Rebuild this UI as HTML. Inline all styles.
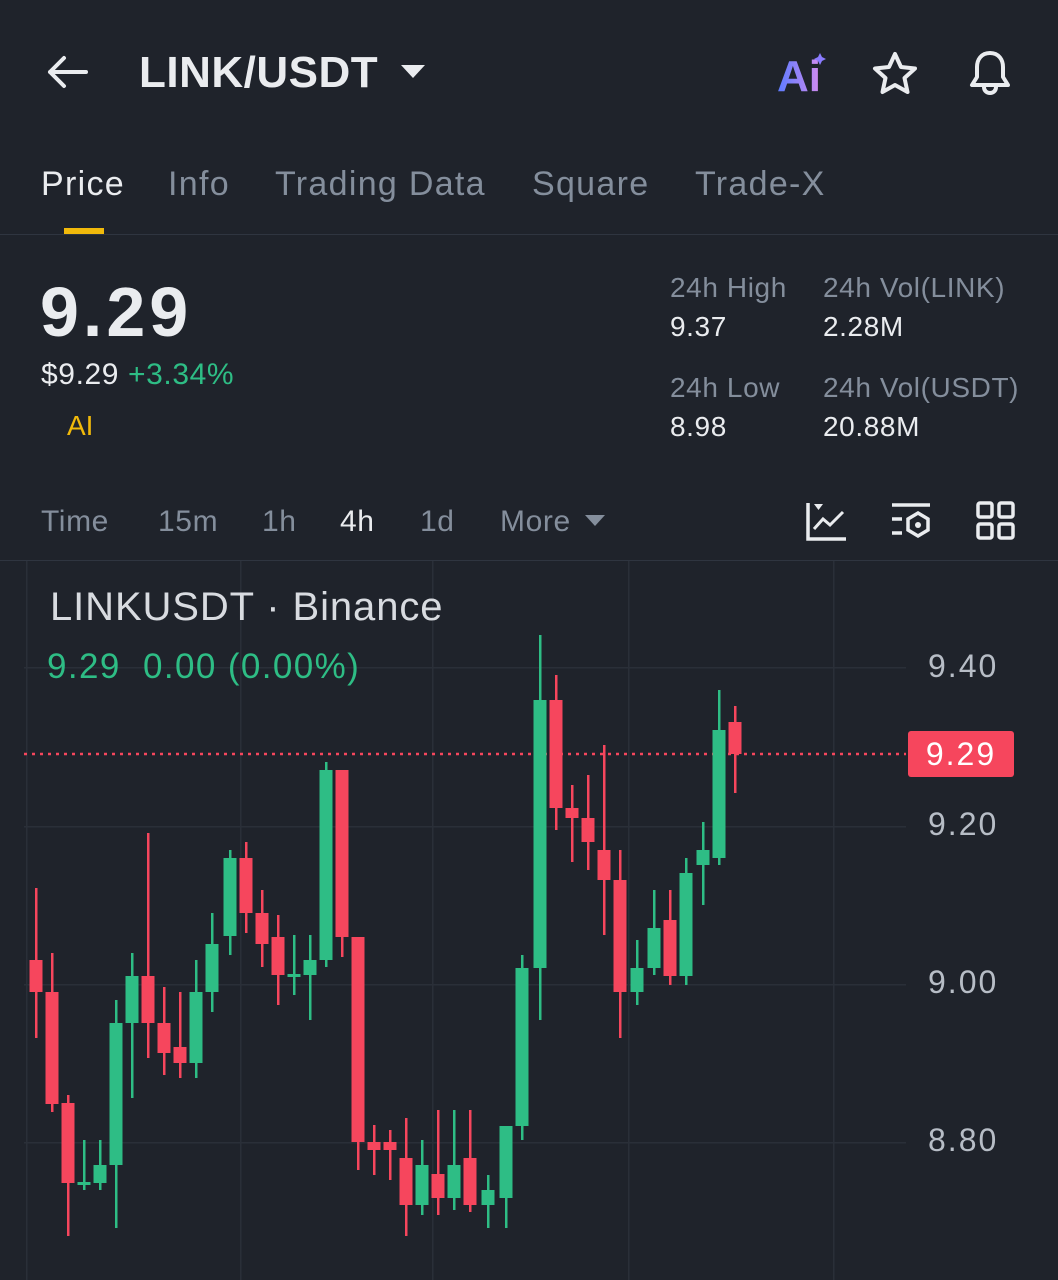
<!DOCTYPE html>
<html><head><meta charset="utf-8"><style>
*{margin:0;padding:0;box-sizing:border-box}
body{width:1058px;height:1280px;background:#1f232b;color:#eaecef;font-family:"Liberation Sans",sans-serif;position:relative;overflow:hidden}
.a{position:absolute;white-space:nowrap}
.g{color:#848e9c}
.t{letter-spacing:1.3px}
.s{letter-spacing:0.6px}
.p{letter-spacing:2px}
</style></head><body>
<svg class="a" style="left:44px;top:52px" width="48" height="40" viewBox="0 0 48 40"><path d="M42 20H6M20 6L6 20l14 14" fill="none" stroke="#eaecef" stroke-width="4" stroke-linecap="round" stroke-linejoin="round"/></svg>
<div class="a" style="left:139px;top:48px;font-size:44px;font-weight:bold;letter-spacing:0.5px">LINK/USDT</div>
<svg class="a" style="left:400px;top:64px" width="26" height="16"><path d="M1 1h24L13 14z" fill="#eaecef"/></svg>
<svg class="a" style="left:775px;top:50px" width="56" height="46" viewBox="0 0 56 46">
<defs><linearGradient id="ag" x1="0" x2="1"><stop offset="0" stop-color="#5b7bff"/><stop offset="1" stop-color="#d38cf0"/></linearGradient></defs>
<text x="2" y="41" font-family="Liberation Sans" font-weight="bold" font-size="44" fill="url(#ag)">Ai</text>
<path d="M45 3l2 4 4 2-4 2-2 4-2-4-4-2 4-2z" fill="#8a7bff"/></svg>
<svg class="a" style="left:870px;top:50px" width="50" height="46" viewBox="0 0 50 46"><path d="M25 4l6 13 14 1.5-10.5 9.5 3 14L25 35l-12.5 7 3-14L5 18.5 19 17z" fill="none" stroke="#eaecef" stroke-width="4" stroke-linejoin="round"/></svg>
<svg class="a" style="left:965px;top:48px" width="50" height="50" viewBox="0 0 50 50"><path d="M25 5c-9 0-13 7-13 14v10l-5 8h36l-5-8V19c0-7-4-14-13-14zM19 39c0 4 3 6 6 6s6-2 6-6" fill="none" stroke="#eaecef" stroke-width="4" stroke-linejoin="round"/></svg>

<div class="a t" style="left:41px;top:165px;font-size:34px">Price</div>
<div class="a g t" style="left:168px;top:165px;font-size:34px">Info</div>
<div class="a g t" style="left:275px;top:165px;font-size:34px">Trading Data</div>
<div class="a g t" style="left:532px;top:165px;font-size:34px">Square</div>
<div class="a g t" style="left:695px;top:165px;font-size:34px">Trade-X</div>
<div class="a" style="left:64px;top:228px;width:40px;height:6px;background:#f0b90b"></div>
<div class="a" style="left:0;top:234px;width:1058px;height:1px;background:#2f3540"></div>

<div class="a" style="left:40px;top:272px;font-size:70px;font-weight:bold;letter-spacing:4px">9.29</div>
<div class="a s" style="left:41px;top:358px;font-size:30px">$9.29 <span style="color:#2ebd85">+3.34%</span></div>
<div class="a" style="left:67px;top:410px;font-size:28px;color:#f0b90b">AI</div>
<div class="a g s" style="left:670px;top:272px;font-size:28px">24h High</div>
<div class="a s" style="left:670px;top:311px;font-size:28px">9.37</div>
<div class="a g s" style="left:823px;top:272px;font-size:28px">24h Vol(LINK)</div>
<div class="a s" style="left:823px;top:311px;font-size:28px">2.28M</div>
<div class="a g s" style="left:670px;top:372px;font-size:28px">24h Low</div>
<div class="a s" style="left:670px;top:411px;font-size:28px">8.98</div>
<div class="a g s" style="left:823px;top:372px;font-size:28px">24h Vol(USDT)</div>
<div class="a s" style="left:823px;top:411px;font-size:28px">20.88M</div>

<div class="a g s" style="left:41px;top:505px;font-size:30px">Time</div>
<div class="a g s" style="left:158px;top:505px;font-size:30px">15m</div>
<div class="a g s" style="left:262px;top:505px;font-size:30px">1h</div>
<div class="a s" style="left:340px;top:505px;font-size:30px">4h</div>
<div class="a g s" style="left:420px;top:505px;font-size:30px">1d</div>
<div class="a g s" style="left:500px;top:505px;font-size:30px">More</div>
<svg class="a" style="left:584px;top:514px" width="22" height="14"><path d="M1 1h20L11 12z" fill="#848e9c"/></svg>
<svg class="a" style="left:805px;top:500px" width="44" height="42" viewBox="0 0 44 42"><path d="M3 3v36h38" fill="none" stroke="#eaecef" stroke-width="3.5"/><path d="M9 29l9-10 7 6 13-13" fill="none" stroke="#eaecef" stroke-width="3"/><path d="M9 4h9l-4.5 6z" fill="#eaecef"/></svg>
<svg class="a" style="left:890px;top:500px" width="44" height="42" viewBox="0 0 44 42"><path d="M2 5h38M2 19h10M2 33h10" stroke="#eaecef" stroke-width="3.5"/><path d="M28 13l10 6v11l-10 6-10-6V19z" fill="none" stroke="#eaecef" stroke-width="3.5"/><circle cx="28" cy="25" r="3" fill="#eaecef"/></svg>
<svg class="a" style="left:975px;top:500px" width="42" height="42" viewBox="0 0 42 42"><g fill="none" stroke="#eaecef" stroke-width="3.5"><rect x="3" y="3" width="14" height="14" rx="2"/><rect x="24" y="3" width="14" height="14" rx="2"/><rect x="3" y="24" width="14" height="14" rx="2"/><rect x="24" y="24" width="14" height="14" rx="2"/></g></svg>
<div class="a" style="left:0;top:560px;width:1058px;height:1px;background:#2f3540"></div>

<svg class="a" id="ch" style="left:0;top:0" width="1058" height="1280"></svg>
<div class="a" style="left:50px;top:585px;font-size:40px;color:#d8dbe0;letter-spacing:0.9px">LINKUSDT · Binance</div>
<div class="a" style="left:47px;top:647px;font-size:35px;color:#2ebd85;letter-spacing:1.4px">9.29&nbsp; 0.00 (0.00%)</div>
<div class="a p" style="left:928px;top:648px;font-size:32px;color:#b7bdc6">9.40</div>
<div class="a p" style="left:928px;top:806px;font-size:32px;color:#b7bdc6">9.20</div>
<div class="a p" style="left:928px;top:964px;font-size:32px;color:#b7bdc6">9.00</div>
<div class="a p" style="left:928px;top:1122px;font-size:32px;color:#b7bdc6">8.80</div>
<div class="a p" style="left:908px;top:731px;width:106px;height:46px;background:#f6465d;border-radius:3px;font-size:32px;color:#fff;text-align:center;line-height:46px">9.29</div>
<script>
var s='';
[26,240,432,628,833].forEach(function(x){s+='<rect x="'+x+'" y="561" width="1.5" height="719" fill="#2a2f38"/>';});
[667,826,984,1142].forEach(function(y){s+='<rect x="24" y="'+y+'" width="882" height="1.5" fill="#2a2f38"/>';});
s+='<line x1="24" y1="754" x2="906" y2="754" stroke="#f6465d" stroke-width="2.5" stroke-dasharray="3 5"/>';
var c=[[36,'r',960,992,888,1038],[52,'r',992,1104,953,1112],[68,'r',1103,1183,1095,1236],[84,'g',1182,1185,1140,1190],[100,'g',1165,1183,1140,1190],[116,'g',1023,1165,1000,1228],[132,'g',976,1023,953,1098],[148,'r',976,1023,833,1058],[164,'r',1023,1053,987,1075],[180,'r',1047,1063,992,1078],[196,'g',992,1063,960,1078],[212,'g',944,992,913,1012],[230,'g',858,936,850,955],[246,'r',858,913,842,933],[262,'r',913,944,890,967],[278,'r',937,975,915,1005],[294,'g',974,977,935,995],[310,'g',960,975,935,1020],[326,'g',770,960,762,967],[342,'r',770,937,770,957],[358,'r',937,1142,937,1170],[374,'r',1142,1150,1125,1175],[390,'r',1142,1150,1130,1180],[406,'r',1158,1205,1118,1236],[422,'g',1165,1205,1140,1215],[438,'r',1174,1198,1110,1215],[454,'g',1165,1198,1110,1210],[470,'r',1158,1205,1110,1212],[488,'g',1190,1205,1175,1228],[506,'g',1126,1198,1126,1228],[522,'g',968,1126,955,1140],[540,'g',700,968,635,1020],[556,'r',700,808,675,830],[572,'r',808,818,785,862],[588,'r',818,842,775,870],[604,'r',850,880,745,935],[620,'r',880,992,850,1038],[637,'g',968,992,940,1005],[654,'g',928,968,890,975],[670,'r',920,976,890,985],[686,'g',873,976,858,985],[703,'g',850,865,822,905],[719,'g',730,858,690,865],[735,'r',722,754,706,793]];
c.forEach(function(k){var col=k[1]=='r'?'#f6465d':'#2ebd85';s+='<rect x="'+(k[0]-1)+'" y="'+k[4]+'" width="2.5" height="'+(k[5]-k[4])+'" fill="'+col+'"/><rect x="'+(k[0]-6.5)+'" y="'+k[2]+'" width="13" height="'+Math.max(2.5,k[3]-k[2])+'" fill="'+col+'"/>';});
document.getElementById('ch').innerHTML=s;
</script>
</body></html>
